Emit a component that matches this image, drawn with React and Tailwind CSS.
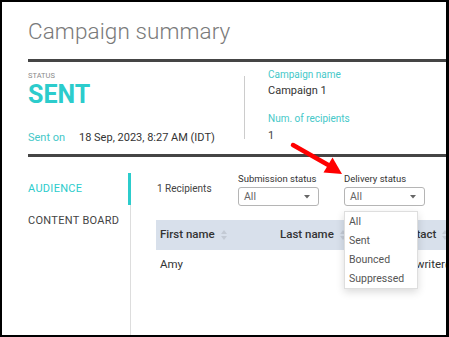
import React from "react";

function Caret() {
  return (
    <svg width="6" height="4" viewBox="0 0 6 4" className="shrink-0">
      <polygon points="0,0 6,0 3,3.5" fill="#666" />
    </svg>
  );
}

function SortIcon() {
  return (
    <svg width="6" height="10" viewBox="0 0 6 10" className="ml-[6px] shrink-0">
      <polygon points="0,4 6,4 3,0" fill="#c3cad4" />
      <polygon points="0,6 6,6 3,10" fill="#c3cad4" />
    </svg>
  );
}

function Select({ label, width, children }) {
  return (
    <div className="flex flex-col shrink-0" style={{ width }}>
      <span className="text-[9.5px] leading-[11px] text-[#333]">{label}</span>
      <div className="relative mt-[3px]">
        <div className="w-[81px] h-[19px] rounded-[3px] border border-[#b5b5b5] flex items-center justify-between pl-[5px] pr-[8px]">
          <span className="text-[10.5px] text-[#666]">All</span>
          <Caret />
        </div>
        {children}
      </div>
    </div>
  );
}

export default function App() {
  const options = ["All", "Sent", "Bounced", "Suppressed"];

  return (
    <div className="w-[449px] h-[337px] bg-white border-l-2 border-t-2 border-r-[3px] border-b-2 border-black overflow-hidden relative font-['Roboto',sans-serif]">
      <div className="pl-[26px] flex flex-col h-full">
        <h1 className="font-['Roboto_Light','Roboto',sans-serif] text-[22.5px] font-light text-[#7a7a7a] leading-[30px] pt-[14px] pb-[13px] tracking-[0.1px]">
          Campaign summary
        </h1>
        <div className="h-[3px] bg-[#454545]" />

        <div className="flex h-[92px]">
          <div className="w-[216px] shrink-0 flex flex-col pt-[9px]">
            <span className="text-[7.5px] leading-[9px] uppercase text-[#8a8a8a]">Status</span>
            <span className="mt-[2px] text-[25px] leading-[25px] font-bold text-[#2ccccc]">SENT</span>
            <div className="flex mt-[24px] text-[11px] leading-[14px]">
              <span className="w-[51px] text-[#45c8c8]">Sent on</span>
              <span className="text-[#333]">18 Sep, 2023, 8:27 AM (IDT)</span>
            </div>
          </div>
          <div className="w-px shrink-0 h-[63px] mt-[14px] bg-[#cccccc]" />
          <div className="flex flex-col ml-[23px] pt-[7px]">
            <span className="text-[10px] leading-[12px] text-[#45c8c8]">Campaign name</span>
            <span className="mt-[3px] text-[11px] leading-[14px] text-[#333]">Campaign 1</span>
            <span className="mt-[15px] text-[10px] leading-[12px] text-[#45c8c8]">Num. of recipients</span>
            <span className="mt-[4px] text-[11px] leading-[14px] text-[#444]">1</span>
          </div>
        </div>
        <div className="h-[3px] bg-[#454545]" />

        <div className="flex flex-1 min-h-0">
          <nav className="w-[103px] shrink-0 mt-[16px] border-r border-[#dddddd] flex flex-col">
            <div className="-mr-px h-[32px] leading-[32px] border-r-[3px] border-[#2ccccc] text-[11px] tracking-[0.3px] text-[#2ccccc]">
              AUDIENCE
            </div>
            <div className="h-[32px] leading-[32px] text-[11px] tracking-[0.3px] text-[#444] whitespace-nowrap">
              CONTENT BOARD
            </div>
          </nav>

          <div className="flex-1 min-w-0 pt-[16px] pl-[25px] flex flex-col">
            <div className="flex">
              <span className="w-[82px] shrink-0 pl-px mt-[10px] text-[10px] leading-[12px] text-[#444]">1 Recipients</span>
              <Select label="Submission status" width={106} />
              <Select label="Delivery status" width={100}>
                <div className="absolute left-0 top-[24px] w-[74px] bg-white border border-[#dedede] shadow-[0_3px_8px_rgba(0,0,0,0.15)] z-10">
                  {options.map((o) => (
                    <div key={o} className="h-[19px] leading-[19px] pl-[4px] text-[10.5px] text-[#555]">
                      {o}
                    </div>
                  ))}
                </div>
              </Select>
            </div>

            <div className="mt-[14px] w-[300px]">
              <div className="flex h-[30px] items-center bg-[#d8e0eb] text-[11.5px] font-medium text-[#333]">
                <div className="w-[120px] shrink-0 pl-[4px] flex items-center">
                  First name
                  <SortIcon />
                </div>
                <div className="w-[116px] shrink-0 pl-[4px] flex items-center">
                  Last name
                  <SortIcon />
                </div>
                <div className="pl-[4px] flex items-center whitespace-nowrap">
                  Contact
                  <SortIcon />
                </div>
              </div>
              <div className="flex pt-[7px] text-[11.5px] leading-[14px] text-[#333]">
                <div className="w-[120px] shrink-0 pl-[4px]">Amy</div>
                <div className="w-[116px] shrink-0 pl-[4px]"></div>
                <div className="pl-[10px] whitespace-nowrap">Unwriter@example.com</div>
              </div>
            </div>
          </div>
        </div>
      </div>

      <svg
        width="449"
        height="337"
        className="absolute left-[-2px] top-[-2px] pointer-events-none"
      >
        <line x1="293" y1="145" x2="330" y2="166" stroke="#ff0000" strokeWidth="4.5" strokeLinecap="round" />
        <polygon points="342,174 323.5,172.5 332.5,157.5" fill="#ff0000" />
      </svg>
    </div>
  );
}
